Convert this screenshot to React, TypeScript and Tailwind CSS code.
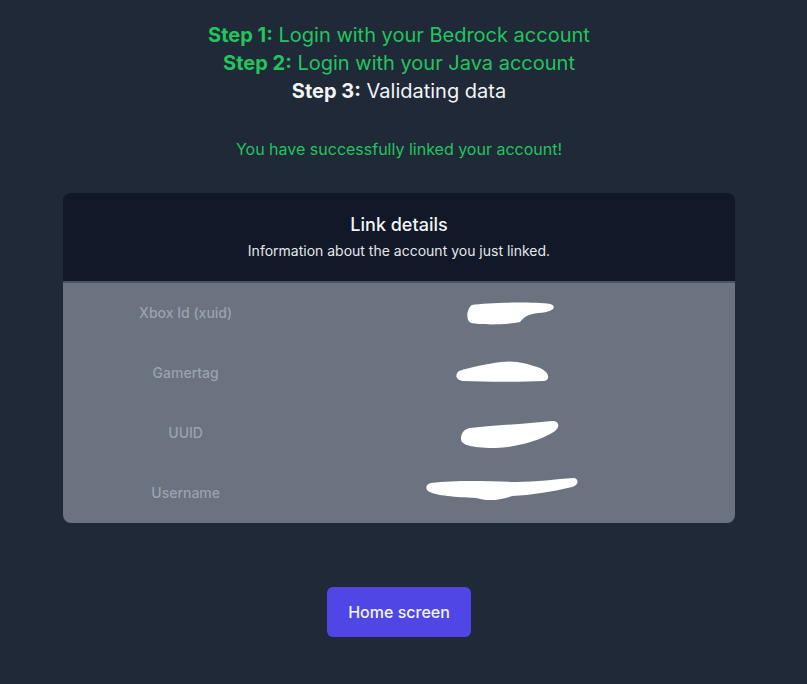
const rows = [
  {
    label: "Xbox Id (xuid)",
    blob: "M46 8 C62 5 110 5 124 7 C131 9 129 15 112 16 C102 17 98 20 94 25 C80 28 55 28 45 26 C39 23 41 11 46 8 Z",
  },
  {
    label: "Gamertag",
    blob: "M33 14 C45 10 60 7 75 5 C90 3 102 7 114 11 C123 15 125 23 118 24 C95 25 60 25 37 24 C29 23 29 17 33 14 Z",
  },
  {
    label: "UUID",
    blob: "M44 11 C70 8 100 7 126 4 C135 4 134 12 126 16 C110 25 90 30 70 31 C50 31 35 29 35 22 C35 15 39 12 44 11 Z",
  },
  {
    label: "Username",
    blob: "M5 6 C30 3 60 4 90 5 C110 5 130 2 148 1 C153 2 153 8 146 10 C125 15 105 18 86 19 C72 24 60 24 50 21 C30 20 10 19 2 14 C-1 11 0 7 5 6 Z",
  },
];

export default function App() {
  return (
    <div className="min-h-screen bg-[#1f2937] font-['Inter',sans-serif]">
      <div className="w-[798px] flex flex-col items-center pt-[21px]">
        <div className="text-xl leading-7 text-center">
          <p className="text-[#22c55e]">
            <span className="font-bold">Step 1:</span> Login with your Bedrock account
          </p>
          <p className="text-[#22c55e]">
            <span className="font-bold">Step 2:</span> Login with your Java account
          </p>
          <p className="text-gray-100">
            <span className="font-bold">Step 3:</span> Validating data
          </p>
        </div>

        <p className="mt-8 text-base leading-6 text-[#22c55e]">
          You have successfully linked your account!
        </p>

        <div className="mt-8 w-[672px] rounded-lg overflow-hidden">
          <div className="bg-[#111827] px-6 pt-5 pb-5 text-center border-b-2 border-[#4b5563]">
            <h3 className="text-lg leading-6 font-medium text-gray-100">Link details</h3>
            <p className="mt-1 text-sm leading-5 text-gray-200">
              Information about the account you just linked.
            </p>
          </div>
          <dl className="bg-[#6b7280]">
            {rows.map((row) => (
              <div key={row.label} className="grid grid-cols-3 gap-4 px-6 py-5">
                <dt className="text-sm leading-5 font-medium text-[#9ca3af] text-center">
                  {row.label}
                </dt>
                <dd className="col-span-2 flex justify-center items-center h-5">
                  <svg width="160" height="32" viewBox="0 0 160 32" className="ml-[1px]">
                    <path d={row.blob} fill="#ffffff" />
                  </svg>
                </dd>
              </div>
            ))}
          </dl>
        </div>

        <button className="mt-16 h-[50px] px-[21px] rounded-md bg-[#4f46e5] text-base font-medium text-gray-100">
          Home screen
        </button>
      </div>
    </div>
  );
}
